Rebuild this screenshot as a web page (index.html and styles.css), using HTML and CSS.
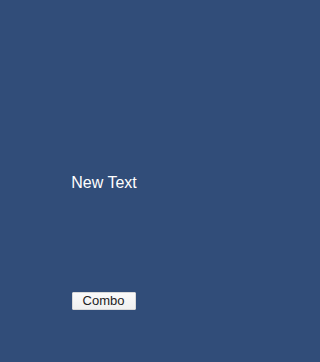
FILE: index.html
```html
<!DOCTYPE html>
<html>
<head>
<meta charset="utf-8">
<link rel="stylesheet" href="styles.css">
</head>
<body>
<div class="screen">
  <div class="label">New Text</div>
  <button class="combo">Combo</button>
</div>
</body>
</html>
```
FILE: styles.css
```css
html, body {
  margin: 0;
  padding: 0;
  background: #314d79;
}
.screen {
  width: 208px;
  height: 362px;
  display: flex;
  flex-direction: column;
  align-items: center;
  font-family: "Liberation Sans", Arial, sans-serif;
}
.label {
  margin-top: 174px;
  font-size: 16px;
  line-height: 18px;
  color: #ffffff;
}
.combo {
  margin-top: 100px;
  margin-right: 1px;
  width: 64px;
  height: 18px;
  padding: 0;
  border: 1px solid #d8d8d8;
  border-radius: 1px;
  background: linear-gradient(#fafafa, #f0f0f0);
  font-family: "Liberation Sans", Arial, sans-serif;
  font-size: 13px;
  line-height: 16px;
  color: #222222;
}
```
